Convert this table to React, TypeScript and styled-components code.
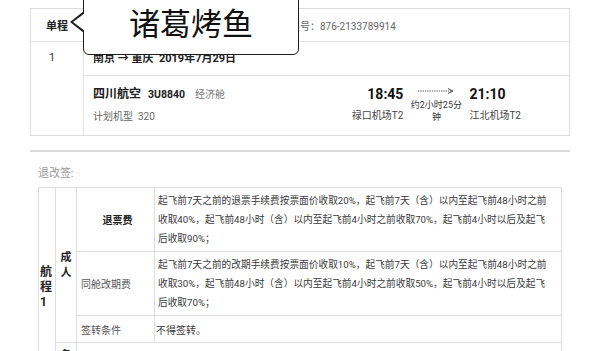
import React from 'react';
import styled, { createGlobalStyle } from 'styled-components';

const GlobalStyle = createGlobalStyle`
  html, body {
    margin: 0;
    padding: 0;
    background: #fff;
  }
  body {
    font-family: Roboto, "Noto Sans CJK SC", "Noto Sans", sans-serif;
    color: #333;
  }
`;

const Page = styled.div`
  position: relative;
  width: 600px;
  height: 351px;
  overflow: hidden;
  padding: 8px 30px 0;
  box-sizing: border-box;
`;

const TicketCard = styled.div`
  display: grid;
  grid-template-columns: 53px 1fr;
  grid-template-rows: 33px 34px 59px;
  border: 1px solid #dcdcdc;
  & > div {
    box-sizing: border-box;
  }
`;

const TripType = styled.div`
  grid-column: 1;
  grid-row: 1;
  display: flex;
  align-items: center;
  justify-content: center;
  border-right: 1px solid #e2e2e2;
  border-bottom: 1px solid #e2e2e2;
  font-size: 11px;
  font-weight: 700;
  color: #222;
`;

const TicketInfo = styled.div`
  grid-column: 2;
  grid-row: 1;
  display: flex;
  align-items: center;
  padding-left: 206px;
  border-bottom: 1px solid #e2e2e2;
  font-size: 10px;
  color: #666;
  white-space: nowrap;
`;

const Sequence = styled.div`
  grid-column: 1;
  grid-row: 2 / span 2;
  border-right: 1px solid #e2e2e2;
  padding: 9px 10px 0 0;
  text-align: center;
  font-size: 11px;
  line-height: 14px;
  color: #333;
`;

const Route = styled.div`
  grid-column: 2;
  grid-row: 2;
  padding: 10px 0 0 9px;
  border-bottom: 1px solid #e2e2e2;
  font-size: 11px;
  line-height: 14px;
  font-weight: 700;
  color: #222;
  white-space: nowrap;
`;

const FlightRow = styled.div`
  grid-column: 2;
  grid-row: 3;
  display: flex;
  justify-content: space-between;
  align-items: flex-start;
  padding: 9px 48px 0 9px;
`;

const FlightMain = styled.div`
  display: flex;
  flex-direction: column;
`;

const CarrierLine = styled.div`
  display: flex;
  align-items: baseline;
  line-height: 18px;
  white-space: nowrap;
`;

const Airline = styled.span`
  font-size: 12px;
  font-weight: 700;
  color: #222;
`;

const FlightNo = styled.span`
  margin-left: 7px;
  font-size: 10.5px;
  font-weight: 700;
  color: #222;
`;

const Cabin = styled.span`
  margin-left: 10px;
  font-size: 10px;
  color: #777;
`;

const SubLine = styled.div`
  margin-top: 6px;
  font-size: 10px;
  line-height: 14px;
  color: #666;
  white-space: nowrap;
`;

const Schedule = styled.div`
  display: flex;
  align-items: flex-start;
`;

const Endpoint = styled.div<{ $align: 'left' | 'right' }>`
  display: flex;
  flex-direction: column;
  align-items: ${(p) => (p.$align === 'right' ? 'flex-end' : 'flex-start')};
  white-space: nowrap;
`;

const Time = styled.div`
  font-size: 14px;
  line-height: 18px;
  font-weight: 700;
  color: #111;
`;

const Station = styled.div`
  margin-top: 6px;
  font-size: 10px;
  line-height: 14px;
  color: #444;
`;

const Duration = styled.div`
  width: 56px;
  margin: 0 5px;
  display: flex;
  flex-direction: column;
  align-items: center;
  padding-top: 2px;
  font-size: 9px;
  line-height: 12px;
  color: #333;
  white-space: nowrap;
  text-align: center;
`;

const DurationText = styled.div`
  margin-top: 4px;
`;

const Divider = styled.div`
  height: 2px;
  margin-top: 14px;
  background: #dadada;
`;

const SectionLabel = styled.div`
  margin: 14px 0 0 8px;
  font-size: 11px;
  line-height: 16px;
  color: #9a9a9a;
`;

const RuleTable = styled.table`
  margin: 5px 0 0 8px;
  width: 524px;
  border-collapse: collapse;
  table-layout: fixed;
`;

const Col = styled.col<{ $w?: number }>`
  width: ${(p) => (p.$w ? `${p.$w}px` : 'auto')};
`;

const Row = styled.tr<{ $h: number }>`
  height: ${(p) => p.$h}px;
`;

const Cell = styled.td`
  border: 1px solid #dedede;
  padding: 0;
  font-size: 10px;
  color: #444;
  vertical-align: middle;
`;

const LegCell = styled(Cell)`
  padding-left: 1px;
  font-size: 12px;
  line-height: 15px;
  font-weight: 700;
  color: #222;
  word-break: break-all;
`;

const PaxCell = styled(Cell)<{ $top?: boolean }>`
  vertical-align: ${(p) => (p.$top ? 'top' : 'middle')};
  padding: ${(p) => (p.$top ? '5px 2px 0' : '0 2px')};
  text-align: center;
  font-size: 11px;
  line-height: 15px;
  font-weight: 700;
  color: #222;
  word-break: break-all;
`;

const ItemCell = styled(Cell)<{ $strong?: boolean }>`
  padding-left: 4px;
  text-align: ${(p) => (p.$strong ? 'center' : 'left')};
  font-weight: ${(p) => (p.$strong ? 700 : 400)};
  color: ${(p) => (p.$strong ? '#222' : '#555')};
`;

const DetailCell = styled(Cell)`
  padding: 3px 4px 3px 3px;
  font-size: 9.7px;
  line-height: 19px;
  color: #3a3a3a;
  vertical-align: top;
`;

const PlainCell = styled(Cell)`
  padding: 0 1px;
  color: #3a3a3a;
`;

const Line = styled.div`
  white-space: nowrap;
`;

const Bubble = styled.div`
  position: absolute;
  left: 83px;
  top: -10px;
  width: 216px;
  height: 65px;
  box-sizing: border-box;
  padding-bottom: 3px;
  border: 1.5px solid #1e1e1e;
  border-radius: 6px;
  background: #fff;
  display: flex;
  align-items: center;
  justify-content: center;
  font-family: "Noto Sans CJK SC", sans-serif;
  font-size: 31px;
  color: #111;
  white-space: nowrap;

  &::before,
  &::after {
    content: '';
    position: absolute;
    border-style: solid;
  }
  &::before {
    left: -14px;
    top: 20px;
    border-width: 11px 14px 11px 0;
    border-color: transparent #1e1e1e transparent transparent;
  }
  &::after {
    left: -11.5px;
    top: 22px;
    border-width: 9px 12px 9px 0;
    border-color: transparent #fff transparent transparent;
  }
`;

const FlightArrow = () => (
  <svg width="36" height="8" viewBox="0 0 36 8">
    <line x1="0" y1="4" x2="34" y2="4" stroke="#333" strokeWidth="0.8" strokeDasharray="1.4 0.9" />
    <path d="M30 1.6 L35 4 L30 6.4" fill="none" stroke="#333" strokeWidth="0.9" />
  </svg>
);

const refundLines = [
  '起飞前7天之前的退票手续费按票面价收取20%，起飞前7天（含）以内至起飞前48小时之前',
  '收取40%，起飞前48小时（含）以内至起飞前4小时之前收取70%，起飞前4小时以后及起飞',
  '后收取90%；',
];

const changeLines = [
  '起飞前7天之前的改期手续费按票面价收取10%，起飞前7天（含）以内至起飞前48小时之前',
  '收取30%，起飞前48小时（含）以内至起飞前4小时之前收取50%，起飞前4小时以后及起飞',
  '后收取70%；',
];

const App = (): JSX.Element => {
  return (
    <>
      <GlobalStyle />
      <Page>
        <TicketCard>
          <TripType>单程</TripType>
          <TicketInfo>票号：876-2133789914</TicketInfo>
          <Sequence>1</Sequence>
          <Route>南京 → 重庆&nbsp;&nbsp;2019年7月29日</Route>
          <FlightRow>
            <FlightMain>
              <CarrierLine>
                <Airline>四川航空</Airline>
                <FlightNo>3U8840</FlightNo>
                <Cabin>经济舱</Cabin>
              </CarrierLine>
              <SubLine>计划机型&nbsp;&nbsp;320</SubLine>
            </FlightMain>
            <Schedule>
              <Endpoint $align="right">
                <Time>18:45</Time>
                <Station>禄口机场T2</Station>
              </Endpoint>
              <Duration>
                <FlightArrow />
                <DurationText>
                  约2小时25分
                  <br />钟
                </DurationText>
              </Duration>
              <Endpoint $align="left">
                <Time>21:10</Time>
                <Station>江北机场T2</Station>
              </Endpoint>
            </Schedule>
          </FlightRow>
        </TicketCard>

        <Divider />
        <SectionLabel>退改签:</SectionLabel>

        <RuleTable>
          <colgroup>
            <Col $w={17} />
            <Col $w={21} />
            <Col $w={78} />
            <Col />
          </colgroup>
          <tbody>
            <Row $h={63}>
              <LegCell rowSpan={4}>航程1</LegCell>
              <PaxCell rowSpan={3}>成人</PaxCell>
              <ItemCell $strong>退票费</ItemCell>
              <DetailCell>
                {refundLines.map((line, index) => (
                  <Line key={index}>{line}</Line>
                ))}
              </DetailCell>
            </Row>
            <Row $h={63}>
              <ItemCell>同舱改期费</ItemCell>
              <DetailCell>
                {changeLines.map((line, index) => (
                  <Line key={index}>{line}</Line>
                ))}
              </DetailCell>
            </Row>
            <Row $h={27}>
              <ItemCell>签转条件</ItemCell>
              <PlainCell>不得签转。</PlainCell>
            </Row>
            <Row $h={44}>
              <PaxCell $top>备注</PaxCell>
              <PlainCell colSpan={2} />
            </Row>
          </tbody>
        </RuleTable>

        <Bubble>诸葛烤鱼</Bubble>
      </Page>
    </>
  );
};

export default App;
